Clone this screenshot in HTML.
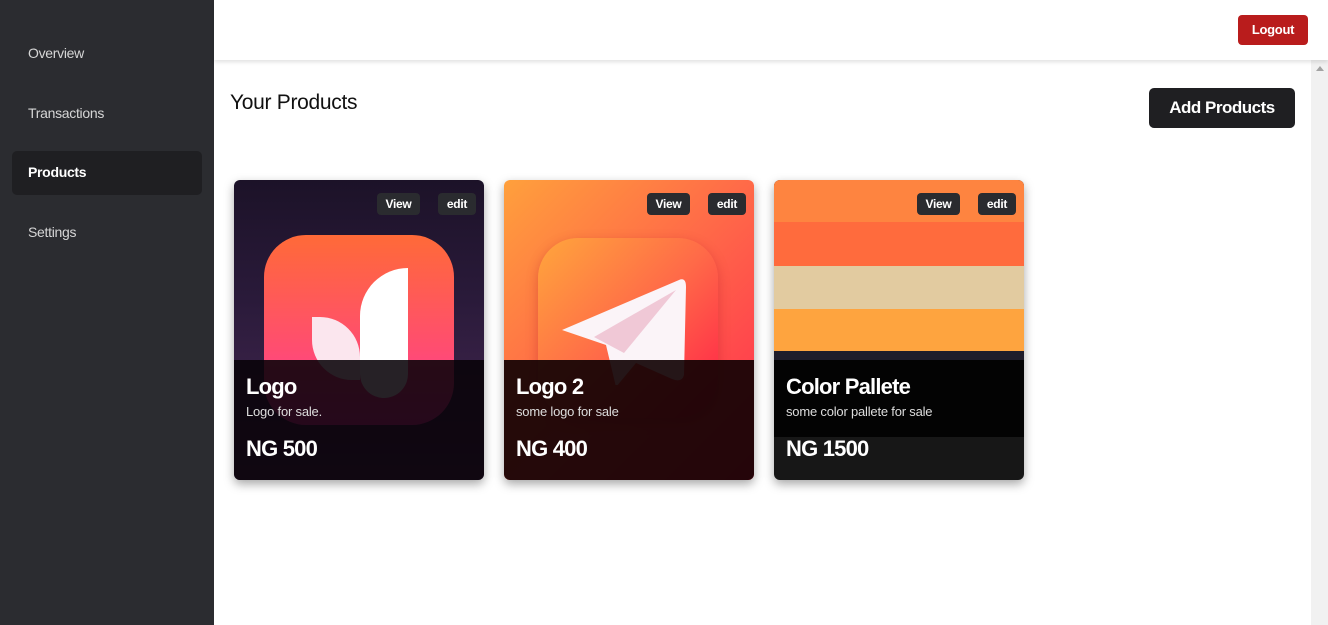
<!DOCTYPE html>
<html><head><style>
*{box-sizing:border-box;margin:0;padding:0}
body{width:1328px;height:625px;overflow:hidden;font-family:"Liberation Sans",sans-serif;background:#fff;position:relative}
.side{position:absolute;left:0;top:0;width:214px;height:625px;background:#2b2c30}
.nav{position:absolute;left:28px;color:#d6d6d6;font-size:14px;letter-spacing:-.3px}
.act{position:absolute;left:12px;top:151px;width:190px;height:44px;background:#1f1f22;border-radius:5px}
.hdr{position:absolute;left:214px;top:0;width:1114px;height:60px;background:#fff;box-shadow:0 2px 4px rgba(0,0,0,.12);z-index:2}
.logout{position:absolute;left:1238px;top:15px;width:70px;height:30px;background:#b91c1c;border-radius:4px;color:#fff;font-size:13px;font-weight:bold;text-align:center;line-height:30px;letter-spacing:-.3px;z-index:3}
.scroll{position:absolute;left:1311px;top:60px;width:17px;height:565px;background:#f1f1f1}
.scroll:after{content:"";position:absolute;left:5px;top:6px;border:4px solid transparent;border-bottom:5px solid #a3a3a3;border-top:0}
h1{position:absolute;left:230px;top:91px;font-size:21px;font-weight:normal;color:#111;letter-spacing:-.3px}
.add{position:absolute;left:1149px;top:88px;width:146px;height:40px;background:#1f1f22;border-radius:5px;color:#fff;font-size:17px;font-weight:bold;text-align:center;line-height:40px;letter-spacing:-.5px}
.card{position:absolute;top:180px;width:250px;height:300px;border-radius:6px;overflow:hidden;box-shadow:0 4px 10px rgba(0,0,0,.35)}
.btn{position:absolute;top:13px;height:22px;background:#2a2b2f;border-radius:4px;color:#fff;font-size:12px;font-weight:bold;text-align:center;line-height:22px;letter-spacing:-.3px;z-index:3}
.ov{position:absolute;left:0;top:180px;width:250px;height:120px;z-index:2;color:#fff}
.t{position:absolute;left:12px;top:14px;font-size:22px;font-weight:bold;letter-spacing:-.8px}
.d{position:absolute;left:12px;top:44px;font-size:13px;color:#ddd;letter-spacing:-.2px}
.p{position:absolute;left:12px;top:76px;font-size:22px;font-weight:bold;letter-spacing:-.8px}
</style></head><body>
<div class="side">
<div class="act"></div>
<div class="nav" style="top:45px">Overview</div>
<div class="nav" style="top:105px">Transactions</div>
<div class="nav" style="top:164px;color:#fff;font-weight:bold">Products</div>
<div class="nav" style="top:224px">Settings</div>
</div>
<div class="hdr"></div>
<div class="logout">Logout</div>
<div class="scroll"></div>
<h1>Your Products</h1>
<div class="add">Add Products</div>

<div class="card" style="left:234px;background:linear-gradient(#1c1228,#2a1a3a 40%,#4a2a55)">
<div style="position:absolute;left:30px;top:55px;width:190px;height:190px;border-radius:42px;background:linear-gradient(#ff6a38,#ff4d70 60%,#ff36a8)"></div>
<div style="position:absolute;left:126px;top:88px;width:48px;height:130px;background:#fff;border-radius:48px 0 24px 24px"></div>
<div style="position:absolute;left:78px;top:137px;width:48px;height:63px;background:#fbe6ee;border-radius:0 40px 0 40px"></div>
<div class="btn" style="left:143px;width:43px">View</div>
<div class="btn" style="left:204px;width:38px">edit</div>
<div class="ov" style="background:rgba(8,2,8,.88)"><div class="t">Logo</div><div class="d">Logo for sale.</div><div class="p">NG 500</div></div>
</div>

<div class="card" style="left:504px;background:linear-gradient(135deg,#ffa03c,#ff6a48 45%,#ff2a50)">
<div style="position:absolute;left:34px;top:58px;width:180px;height:180px;border-radius:40px;background:linear-gradient(135deg,#ffa63c,#ff6a48 50%,#ff1e48);box-shadow:0 4px 12px rgba(160,0,30,.3)"></div>
<svg style="position:absolute;left:50px;top:95px" width="140" height="110" viewBox="0 0 140 110"><path d="M8 55 L125 5 Q132 2 132 12 L130 100 Q128 108 118 104 L82 88 L62 112 L52 70 Z" fill="#fbf4f8"/><path d="M40 62 L122 15 L70 78 Z" fill="#f0c8d6"/></svg>
<div class="btn" style="left:143px;width:43px">View</div>
<div class="btn" style="left:204px;width:38px">edit</div>
<div class="ov" style="background:rgba(18,2,4,.92)"><div class="t">Logo 2</div><div class="d">some logo for sale</div><div class="p">NG 400</div></div>
</div>

<div class="card" style="left:774px;background:#171717">
<div style="position:absolute;left:0;top:0;width:250px;height:42px;background:#fe8440"></div>
<div style="position:absolute;left:0;top:42px;width:250px;height:44px;background:#ff6b3d"></div>
<div style="position:absolute;left:0;top:86px;width:250px;height:43px;background:#e2cba0"></div>
<div style="position:absolute;left:0;top:129px;width:250px;height:42px;background:#fea43f"></div>
<div style="position:absolute;left:0;top:171px;width:250px;height:9px;background:#1f1d2b"></div>
<div class="btn" style="left:143px;width:43px">View</div>
<div class="btn" style="left:204px;width:38px">edit</div>
<div class="ov"><div style="position:absolute;left:0;top:0;width:250px;height:77px;background:#030303"></div><div class="t">Color Pallete</div><div class="d">some color pallete for sale</div><div class="p">NG 1500</div></div>
</div>
</body></html>
